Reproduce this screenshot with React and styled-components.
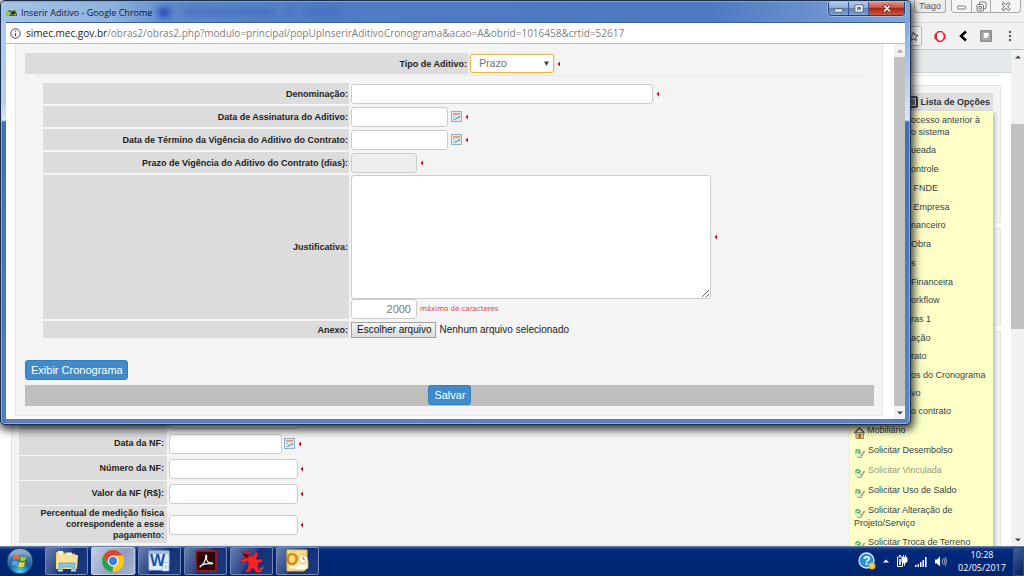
import React from "react";
import styled, { createGlobalStyle, css } from "styled-components";

const GlobalStyle = createGlobalStyle`
  *, *::before, *::after { box-sizing: border-box; }
  body { margin: 0; font-family: "Liberation Sans", Arial, sans-serif; font-size: 9px; color: #222; }
  button, input, select, textarea { font-family: inherit; margin: 0; }
`;

const SEGOE = `"Open Sans", "Noto Sans", sans-serif`;

/* ---------- desktop ---------- */

const Desktop = styled.div`
  position: relative;
  display: grid;
  grid-template-rows: minmax(0, 1fr) 30px;
  height: 100vh;
  overflow: hidden;
`;

const Browser = styled.div`
  display: flex;
  flex-direction: column;
  min-height: 0;
  background: #fff;
`;

const BrowserTitle = styled.div`
  display: flex;
  justify-content: flex-end;
  gap: 5px;
  flex: 0 0 22px;
  padding-right: 3px;
  background: #f1f1f1;
`;

const UserChip = styled.button`
  height: 13px;
  width: 32px;
  padding: 0;
  border: 1px solid #aaa;
  border-top: 0;
  border-radius: 0 0 3px 3px;
  background: #eee;
  color: #555;
  font-size: 9px;
  line-height: 12px;
`;

const WindowButtons = styled.div`
  display: flex;
  height: 13px;
  border: 1px solid #aaa;
  border-top: 0;
  border-radius: 0 0 4px 4px;
  overflow: hidden;
`;

const WindowButton = styled.button`
  display: grid;
  place-items: center;
  width: ${(p) => (p.$wide ? 30 : 19)}px;
  padding: 0;
  border: 0;
  border-left: 1px solid #aaa;
  background: #f5f5f5;
  &:first-child { border-left: 0; }
`;

const BrowserTools = styled.div`
  display: flex;
  align-items: center;
  justify-content: flex-end;
  gap: 12px;
  flex: 0 0 28px;
  padding-right: 8px;
  background: #f1f1f1;
  border-top: 1px solid #ddd;
  border-bottom: 1px solid #c4c4c4;
`;

const Omnibox = styled.div`
  display: flex;
  align-items: center;
  justify-content: flex-end;
  flex: 1;
  height: 20px;
  margin-left: 80px;
  padding-right: 2px;
  background: #fff;
  border: 1px solid #bbb;
  border-radius: 2px;
`;

const BrowserBody = styled.div`
  display: flex;
  flex: 1;
  min-height: 0;
`;

const Page = styled.div`
  position: relative;
  display: flex;
  flex-direction: column;
  flex: 1;
  min-width: 0;
  overflow: hidden;
`;

const PageBanner = styled.div`
  flex: 0 0 23px;
  background: #e4e9ec;
  border-bottom: 1px solid #cdd3d6;
`;

const Cards = styled.div`
  display: flex;
  flex-direction: column;
  gap: 5px;
  margin: 2px 10px 0 11px;
  padding-top: 9px;
  border-top: 1px solid #e6e6e6;
  flex: 1;
  min-height: 0;
`;

const Card = styled.section`
  flex: ${(p) => (p.$height ? `0 0 ${p.$height}px` : "1 0 auto")};
  padding: ${(p) => (p.$height ? "0" : "74px 8px 0 7px")};
  background: #f4f4f4;
  border: 1px solid #e6e6e6;
`;

const InvoiceRow = styled.div`
  display: grid;
  grid-template-columns: 148px auto auto;
  justify-content: start;
  align-items: center;
  column-gap: 2px;
  min-height: 25px;
`;

const InvoiceLabel = styled.label`
  display: flex;
  align-items: center;
  justify-content: flex-end;
  align-self: stretch;
  margin-bottom: 1px;
  padding: 2px 3px 2px 20px;
  background: #dcdcdc;
  font-weight: bold;
  line-height: 11px;
  text-align: right;
`;

/* ---------- options menu ---------- */

const Options = styled.aside`
  position: absolute;
  top: 43px;
  right: 18px;
  bottom: 0;
  display: flex;
  flex-direction: column;
  width: 143px;
`;

const OptionsTitle = styled.h2`
  display: flex;
  align-items: center;
  justify-content: flex-end;
  gap: 2px;
  flex: 0 0 18px;
  margin: 0;
  padding-right: 3px;
  background: #dedede;
  font-size: 9px;
  color: #333;
`;

const OptionList = styled.ul`
  flex: 1;
  min-height: 0;
  margin: 0;
  padding: 3px 0 0 4px;
  overflow: hidden;
  list-style: none;
  background: #ffffc8;
  box-shadow: 2px 2px 4px #bbb;
`;

const Option = styled.li`
  padding-left: ${(p) => (p.$clipped ? 57 : 0)}px;
  padding-bottom: ${(p) => (p.$compact ? 6 : 7)}px;
  line-height: 12px;
  white-space: ${(p) => (p.$clipped ? "nowrap" : "normal")};
  svg { vertical-align: -4px; margin: -2px 2px -2px 0; }
`;

const OptionLink = styled.a`
  color: ${(p) => (p.$muted ? "#99997e" : "#333f4a")};
  text-decoration: none;
`;

/* ---------- scrollbars ---------- */

const Scrollbar = styled.div`
  display: flex;
  flex-direction: column;
  justify-content: space-between;
  flex: 0 0 ${(p) => p.$width}px;
  background: #f1f1f1;
`;

const ScrollEnd = styled.button`
  display: grid;
  place-items: center;
  height: 13px;
  padding: 0;
  border: 0;
  background: none;
`;

const ScrollTrack = styled.div`
  flex: 1;
  padding-top: ${(p) => p.$before}%;
  display: flex;
`;

const ScrollThumb = styled.div`
  flex: 1;
  height: ${(p) => p.$size}%;
  background: #c1c1c1;
`;

/* ---------- popup window ---------- */

const Popup = styled.div`
  position: absolute;
  top: 0;
  left: 0;
  right: 113px;
  padding: 0 5px 5px;
  border: 1px solid #1c2f4a;
  border-radius: 5px;
  background:
    linear-gradient(#a9c6ea, #b5cdee 100px, #dce7f6 119px, #3f6fb4 121px, #4e7dbf) left / 5px 100% no-repeat,
    linear-gradient(#6e97d0, #a8c3ea 60px, #dce7f6 119px, #3f6fb4 121px, #5a88c6) right / 5px 100% no-repeat,
    #5a80bd;
  box-shadow: 1px 3px 9px 2px rgba(0, 0, 0, 0.75), inset 0 0 0 1px rgba(190, 215, 245, 0.55);
`;

const PopupTitle = styled.div`
  display: flex;
  align-items: center;
  gap: 4px;
  height: 21px;
  margin: 0 -5px;
  padding: 0 5px 0 5px;
  border-radius: 4px 4px 0 0;
  background: linear-gradient(90deg, #a7c4e5, #8fb2de 110px, #5c8acb 170px, #4c7cc3 330px, #4c7bc1 78%, #84a6d9);
  border-top: 1px solid #7fa5d8;
  font-family: ${SEGOE};
  font-size: 9px;
  color: #10182a;
`;

const TitleGhost = styled.div`
  display: flex;
  gap: 12px;
  align-items: center;
  margin-left: 2px;
  flex: 1;
  filter: blur(3px);
  i { height: 6px; background: #2a4fae; opacity: 0.4; }
  i:first-child { width: 12px; height: 9px; background: #0e2cae; opacity: 0.7; }
  i:nth-child(2) { width: 92px; }
  i:nth-child(3) { width: 6px; }
  i:nth-child(4) { width: 36px; opacity: 0.25; }
`;

const Captions = styled.div`
  display: flex;
  align-self: flex-start;
  height: 14px;
  border: 1px solid #24406e;
  border-top: 0;
  border-radius: 0 0 4px 4px;
  overflow: hidden;
  box-shadow: 0 0 0 1px rgba(200, 220, 250, 0.5);
`;

const Caption = styled.button`
  display: grid;
  place-items: center;
  width: ${(p) => (p.$close ? 35 : 20)}px;
  padding: 0;
  border: 0;
  border-right: ${(p) => (p.$close ? "0" : "1px solid #34548a")};
  background: ${(p) =>
    p.$close
      ? "linear-gradient(#dd9184, #c9503c 45%, #ad2411 50%, #cf5842)"
      : "linear-gradient(#b3c9ea, #8fabd6 45%, #5c80b8 50%, #7fa3d6)"};
`;

const AddressBar = styled.div`
  display: flex;
  align-items: center;
  gap: 5px;
  height: 22px;
  padding-left: 4px;
  background: #fff;
  border-top: 1px solid #3a5f99;
  border-bottom: 1px solid #bcbcbc;
  font-family: ${SEGOE};
  font-size: 10px;
  color: #808080;
  white-space: nowrap;
  b { font-weight: normal; color: #222; }
`;

const PopupBody = styled.div`
  display: flex;
  background: #fff;
`;

const Panel = styled.form`
  flex: 1;
  min-width: 0;
  margin: 0 11px 3px 9px;
  padding: 9px 8px 9px 9px;
  background: #f4f4f4;
  border: 1px solid #e4e8ee;
  border-top: 0;
`;

const FieldRow = styled.div`
  display: grid;
  grid-template-columns: ${(p) => (p.$top ? 443 : 306)}px auto;
  justify-content: start;
  align-items: center;
  column-gap: 2px;
  min-height: ${(p) => (p.$short ? 17 : 21)}px;
`;

const FieldLabel = styled.label`
  display: flex;
  align-items: center;
  justify-content: flex-end;
  align-self: stretch;
  padding-right: 1px;
  background: #dcdcdc;
  font-weight: bold;
`;

const FieldBody = styled.div`
  display: flex;
  align-items: center;
  gap: 3px;
`;

const Rule = styled.hr`
  height: 1px;
  margin: 1px 9px 7px;
  border: 0;
  background: #e8e8e8;
`;

const Fields = styled.div`
  display: flex;
  flex-direction: column;
  gap: 2px;
  margin: 0 18px 22px;
`;

const controlLook = css`
  border: 1px solid #ccc;
  border-radius: 3px;
  background: #fff;
  color: #777;
  font-size: 11px;
  outline: 0;
`;

const TextBox = styled.input`
  ${controlLook}
  width: ${(p) => p.$width}px;
  height: 20px;
  padding: 0 5px;
  &:disabled { background: #eee; }
  &:read-only { text-align: right; }
`;

const TextArea = styled.textarea`
  ${controlLook}
  display: block;
  width: 360px;
  height: 124px;
`;

const SelectWrap = styled.div`
  position: relative;
  svg { position: absolute; right: 5px; top: 7px; pointer-events: none; }
`;

const Select = styled.select`
  ${controlLook}
  display: block;
  appearance: none;
  width: 84px;
  height: 19px;
  padding: 0 8px;
  border-color: #e3b84e;
  box-shadow: 0 0 3px #f3cf7c;
  font-family: Roboto, sans-serif;
`;

const Stack = styled.div`
  display: flex;
  flex-direction: column;
`;

const Hint = styled.span`
  font-family: "DejaVu Sans", Verdana, sans-serif;
  font-size: 7px;
  color: #e03a48;
`;

const FileButton = styled.label`
  position: relative;
  height: 16px;
  padding: 0 4px 0 5px;
  border: 1px solid #a2a2a2;
  background: linear-gradient(#f6f6f6, #dadada);
  font-size: 10px;
  line-height: 14px;
  color: #111;
  input { position: absolute; inset: 0; width: 100%; opacity: 0; }
`;

const FileName = styled.span`
  font-size: 10px;
  color: #222;
`;

const BlueButton = styled.button`
  display: block;
  height: 20px;
  padding: 0 4px 0 5px;
  border: 1px solid #357ebd;
  border-radius: 3px;
  background: #428bca;
  color: #fff;
  font-size: 11px;
  line-height: 18px;
`;

const Footer = styled.div`
  display: flex;
  justify-content: center;
  margin-top: 5px;
  height: 21px;
  background: #bfbfbf;
`;

/* ---------- taskbar ---------- */

const Taskbar = styled.footer`
  display: flex;
  align-items: center;
  background: linear-gradient(#7f93b8, #1d3f86 2px, #00297a 5px, #002470);
`;

const StartButton = styled.button`
  width: 45px;
  height: 30px;
  padding: 1px 0 0 6px;
  border: 0;
  background: none;
  text-align: left;
`;

const Tasks = styled.div`
  display: flex;
  gap: 3px;
  flex: 1;
`;

const Task = styled.button`
  display: grid;
  place-items: center;
  width: ${(p) => (p.$active ? 44 : 43)}px;
  height: 28px;
  padding: 0;
  border: 1px solid ${(p) => (p.$active ? "#c3cfe4" : "#7488b4")};
  border-radius: 2px;
  background: ${(p) =>
    p.$active
      ? "linear-gradient(120deg, #c4cee2, #8d9dc0 60%, #a9b6d0)"
      : "linear-gradient(125deg, #6a7eae, #2b4687 45%, #102f76 50%, #1e3d80)"};
  box-shadow: ${(p) => (p.$active ? "2px 0 0 -1px #54699c" : "none")};
`;

const Tray = styled.div`
  display: flex;
  align-items: center;
  gap: 7px;
`;

const Clock = styled.time`
  width: 60px;
  margin-left: -2px;
  font-family: ${SEGOE};
  font-size: 9px;
  line-height: 13px;
  color: #fff;
  text-align: center;
`;

const ShowDesktop = styled.button`
  width: 11px;
  height: 29px;
  margin-left: -6px;
  padding: 0;
  border: 1px solid #2e4a86;
  background: linear-gradient(135deg, #46609a, #071f5c);
`;

/* ---------- drawings ---------- */

const Required = () => (
  <svg width="4" height="6" viewBox="0 0 4 6" role="img" aria-label="obrigatório">
    <path d="M3 0.5v5L0.5 3z" fill="#d8001c" />
  </svg>
);

const Calendar = () => (
  <svg width="11" height="11" viewBox="0 0 11 11">
    <rect x=".5" y=".5" width="10" height="10" fill="#dfeaf2" stroke="#8fb0cc" />
    <path d="M2 2h7v2H2z" fill="#e8a07c" />
    <path d="M2 5h2v1H2zM5 6h1v1H5zM2 8h3v1H2z" fill="#9dbfcb" />
    <path d="M7 5h2v2H7zM4 7h3v1H4z" fill="#6bb19c" />
  </svg>
);

const Arrow = ({ up, color = "#444" }) => (
  <svg width="6" height="4" viewBox="0 0 6 4">
    <path d={up ? "M0 3.5h6L3 .5z" : "M0 .5h6L3 3.5z"} fill={color} />
  </svg>
);

const SelectArrow = () => (
  <svg width="5" height="5" viewBox="0 0 5 5">
    <path d="M0 .5h5L2.5 5z" fill="#444" />
  </svg>
);

const Info = () => (
  <svg width="11" height="11" viewBox="0 0 11 11" fill="none" stroke="#444">
    <circle cx="5.5" cy="5.5" r="4.7" />
    <path d="M5.5 5v3.2M5.5 2.6v1.2" />
  </svg>
);

const SiteIcon = () => (
  <svg width="11" height="9" viewBox="0 0 11 9">
    <path d="M0 6l3-4 3 1 3-1 2 4v2H0z" fill="#3d6b2c" />
    <path d="M0 6l3-3 2 2-2 3H0z" fill="#9ccb37" />
    <path d="M6 4h3v2H6z" fill="#22301d" />
    <path d="M8 6h2v1H8z" fill="#d8c65a" />
  </svg>
);

const Minimize = ({ stroke = "#555" }) => (
  <svg width="11" height="8" viewBox="0 0 11 8">
    <rect x="1.5" y="4" width="8" height="3" rx="1" fill="#fff" stroke={stroke} strokeWidth=".8" />
  </svg>
);

const Maximize = () => (
  <svg width="10" height="9" viewBox="0 0 10 9">
    <rect x="1" y="1" width="8" height="7" fill="#fff" stroke="#4a5a7a" strokeWidth=".8" />
    <rect x="3.4" y="3.4" width="3.2" height="2" fill="#6d8fc4" stroke="#4a5a7a" strokeWidth=".7" />
  </svg>
);

const Restore = () => (
  <svg width="11" height="11" viewBox="0 0 11 11" fill="#fff" stroke="#666" strokeWidth=".9">
    <rect x="3.5" y="1" width="6.5" height="6.5" rx="1" />
    <rect x="1" y="3.5" width="6.5" height="6.5" rx="1" />
    <rect x="3" y="5.5" width="2.5" height="2.5" />
  </svg>
);

const Cross = ({ stroke = "#666" }) => (
  <svg width="10" height="9" viewBox="0 0 10 9" strokeLinecap="square">
    <path d="M2.5 2l5 5M7.5 2l-5 5" stroke={stroke} strokeWidth="3" />
    <path d="M2.5 2l5 5M7.5 2l-5 5" stroke="#fff" strokeWidth="1.5" />
  </svg>
);

const Star = () => (
  <svg width="11" height="11" viewBox="0 0 11 11">
    <path d="M5.5 1l1.3 3 3.2.3-2.4 2.1.7 3.2-2.8-1.7-2.8 1.7.7-3.2L1 4.300l3.200-.3z" fill="none" stroke="#555" />
  </svg>
);

const Blocker = () => (
  <svg width="12" height="13" viewBox="0 0 12 13">
    <path d="M4 1h4l3.5 3.5v4L8 12H4L.5 8.5v-4z" fill="#e3242b" />
    <path d="M3 4l1.500-1.500h4V5l1-.5v3L8 10.500H5L3 8.500z" fill="#fff" />
  </svg>
);

const BackArrow = () => (
  <svg width="10" height="12" viewBox="0 0 10 12">
    <path d="M8 1.5L3 6l5 4.5" fill="none" stroke="#000" strokeWidth="2.4" />
  </svg>
);

const GreyBadge = () => (
  <svg width="12" height="12" viewBox="0 0 12 12">
    <rect width="12" height="12" rx="1" fill="#8b8b8b" />
    <rect x="1.5" y="1.5" width="9" height="9" fill="#aaa" />
    <path d="M4 3h4l1 2-2 3H5L3.5 6z" fill="#fff" />
  </svg>
);

const Dots = () => (
  <svg width="12" height="12" viewBox="0 0 12 12" fill="#555">
    <circle cx="6" cy="2" r="1.2" />
    <circle cx="6" cy="6" r="1.2" />
    <circle cx="6" cy="10" r="1.2" />
  </svg>
);

const ListIcon = () => (
  <svg width="12" height="12" viewBox="0 0 12 12" fill="none" stroke="#111">
    <rect x="1" y="1" width="10" height="10" rx="1" strokeWidth="1.6" />
    <path d="M3 4h6M3 6h6M3 8h6" />
  </svg>
);

const House = () => (
  <svg width="11" height="12" viewBox="0 0 11 12">
    <path d="M2 5.5h7.5V11.5H2z" fill="#e9c98e" stroke="#75614a" strokeWidth=".7" />
    <path d="M.5 6L5.5 1l5 5" fill="none" stroke="#5b5648" strokeWidth="1.3" />
    <path d="M4.5 7h2.5v4.5H4.500z" fill="#a86a21" />
  </svg>
);

const EditIcon = () => (
  <svg width="12" height="12" viewBox="0 0 12 12">
    <path d="M1.500 3h5v7h-3l-2-2z" fill="#e6efdc" stroke="#b5c9ae" strokeWidth=".6" />
    <path d="M3 1.500l4 2.500-1.500 3L1 5z" fill="#58b560" />
    <path d="M3 3.500l2 .8-.6 1-2-.8z" fill="#e8ffe8" />
    <path d="M10.500 4L7 9.500" stroke="#c88f68" strokeWidth="1.5" />
    <path d="M3 10.500h5" stroke="#b9a9a0" />
  </svg>
);

const Orb = () => (
  <svg width="28" height="28" viewBox="0 0 28 28">
    <defs>
      <radialGradient id="orb" cx=".5" cy=".9" r=".9">
        <stop offset="0" stopColor="#4fd0f2" />
        <stop offset=".45" stopColor="#1a5f9c" />
        <stop offset="1" stopColor="#7d9fc3" />
      </radialGradient>
    </defs>
    <circle cx="14" cy="14" r="13" fill="url(#orb)" stroke="#163a66" />
    <path d="M8 8.5c2-1.3 4-1.2 5.7 0L12.5 13c-2-1-3.700-1-5.800 0z" fill="#f0672c" />
    <path d="M14.700 9c2 1 4 1 6-.2L19.300 13.500c-2 1-4 1-5.800 0z" fill="#92c940" />
    <path d="M6.500 14.200c2-1 3.900-1 5.700 0L11 19c-1.800-1.200-3.700-1.200-5.800 0z" fill="#4fa8e8" />
    <path d="M13.200 14.700c2 1 4 1 5.900 0L17.800 19.500c-2 1-4 1-5.900 0z" fill="#fbd02e" />
    <path d="M3 10C6 0 22 0 25 10 19 7 9 7 3 10z" fill="#fff" opacity=".25" />
  </svg>
);

const Folder = () => (
  <svg width="26" height="24" viewBox="0 0 26 24">
    <path d="M2 3h8l1 1.5h10l1 2V20H2z" fill="#e9cb6c" />
    <path d="M4 2h5v4H4zM12 3.5h6v3h-6z" fill="#f6efc8" />
    <path d="M3 6h21l-1 14H2z" fill="#f5e19a" />
    <path d="M5 14h16v7h-3v-3H8v3H5z" fill="#8cc4e6" stroke="#4f93c0" strokeWidth=".7" />
    <path d="M4 21.500h5M17 21.500h5" stroke="#b8e0f2" strokeWidth="2" />
  </svg>
);

const Chrome = () => (
  <svg width="24" height="24" viewBox="0 0 24 24">
    <circle cx="12" cy="12" r="11" fill="#fbc916" />
    <path d="M12 12L2.470 6.500A11 11 0 0 1 21.500 6.500H12z" fill="#dd4535" />
    <path d="M2.470 6.500L7.300 15 12 6.500z" fill="#dd4535" />
    <path d="M2.470 6.500L7.200 14.800 12 17.500 11.500 23A11 11 0 0 1 2.470 6.500z" fill="#25a15a" />
    <circle cx="12" cy="12" r="5.400" fill="#fff" />
    <circle cx="12" cy="12" r="4.200" fill="#3f7de0" />
  </svg>
);

const IconText = styled.text`
  font-family: "Liberation Sans", Arial, sans-serif;
  font-weight: bold;
`;

const WordIcon = () => (
  <svg width="24" height="24" viewBox="0 0 24 24">
    <path d="M1 2h20v14l-4 5H1z" fill="#e3edf8" stroke="#b7cbe0" />
    <path d="M1 2h20v3H1z" fill="#9cc0e8" />
    <path d="M15 13l6 1v8h-7z" fill="#f4f8fc" stroke="#7fa2cf" strokeWidth=".7" />
    <path d="M16.500 17h3M16.500 19h3" stroke="#8fb0da" />
    <IconText x="2" y="17" fontSize="16" fill="#1c50a4">W</IconText>
  </svg>
);

const Acrobat = () => (
  <svg width="22" height="22" viewBox="0 0 22 22">
    <rect x="1" y="1" width="20" height="20" fill="#2b0505" stroke="#b01c14" strokeWidth="1.6" />
    <path d="M5 16.500c3-1.500 5.500-5.500 5.800-10.500.1-1.500 1.400-1 .8 1-.9 3.500 1.400 6 5.400 5.800 1.300.2.800 1.500-.6 1.200-3.500-.8-6.800-.4-9.800 1.200-.8 1.500-2 2.200-1.600 1.300z" fill="none" stroke="#fff" strokeWidth="1.1" />
  </svg>
);

const RedBeast = () => (
  <svg width="26" height="25" viewBox="0 0 26 25">
    <path d="M3 2l2 1.500L9 3l1.500-2 .8 4 .2 2.500L15 6l1-3 3 .5-.5 4-1.500 2 1 1 5-.5 1 2.500-5 1.500.5 2-1 2 2.500 3-1 2.500h-4l.5-2-3.500-2.500L11 23H6l.5-2 2-1 1-5-1-2.500L2 13.500 1 11l6-2-2.500-1.500z" fill="#f62424" stroke="#5c1438" strokeWidth=".5" />
    <path d="M20.500 18.500c1.500 2 4 1 3.500-.8M22 19.500c1 2-.5 3.500-2 3" fill="none" stroke="#f04040" strokeWidth="1.2" />
    <path d="M4.500 5l3 1.500M7.500 6.500L10 4.800M6.500 7.800h3" stroke="#300008" strokeWidth="1.5" />
  </svg>
);

const Outlook = () => (
  <svg width="25" height="24" viewBox="0 0 25 24">
    <path d="M2 1h20v18l-3 3H2z" fill="#f5dc8c" stroke="#e6bb56" />
    <path d="M10 11h13v8l-3 2H9z" fill="#fdf4d2" stroke="#e2b04a" strokeWidth=".7" />
    <circle cx="18" cy="10" r="4.500" fill="#fffbe9" stroke="#d8a032" strokeWidth=".8" />
    <path d="M18 7.500V10l2 1" fill="none" stroke="#b77914" />
    <path d="M5 18l7 1 8-1" fill="none" stroke="#fff" strokeWidth="2" />
    <IconText x="1" y="16" fontSize="16" fill="#d98410">O</IconText>
  </svg>
);

const Help = () => (
  <svg width="18" height="18" viewBox="0 0 18 18">
    <circle cx="8.500" cy="8.500" r="7.500" fill="#2c8fdb" stroke="#dcecf8" strokeWidth="1.3" />
    <IconText x="5" y="13" fontSize="12" fill="#fff">?</IconText>
    <circle cx="14" cy="14" r="3.500" fill="#f5b51e" />
    <path d="M14 12v3.500" stroke="#fff" />
  </svg>
);

const Plug = () => (
  <svg width="12" height="14" viewBox="0 0 12 14" fill="none" stroke="#fff">
    <path d="M1.500 3v9.500h5V3zM3 1.500h2" />
    <path d="M3 5h2v6H3z" fill="#cfd6e4" stroke="none" />
    <path d="M6 3.500h5v4L9.500 9H7.500L6 7.500zM8.500 9v3M7.500 1v2M9.500 1v2" fill="#fff" strokeWidth=".9" />
  </svg>
);

const Signal = () => (
  <svg width="13" height="11" viewBox="0 0 13 11" fill="#fff">
    <path d="M0 9h1.500v2H0zM2.500 8H4v3H2.500zM5 6h1.500v5H5zM7.500 4H9v7H7.500zM10 1h1.600v10H10z" />
  </svg>
);

const Speaker = () => (
  <svg width="12" height="11" viewBox="0 0 12 11">
    <path d="M0 3.500h2L5 .5v10L2 7.500H0z" fill="#fff" />
    <path d="M7 3.500q1.200 2 0 4M8.700 2.300q2 3.200 0 6.400M10.300 1.200q2.400 4.300 0 8.600" fill="none" stroke="#d5dcec" strokeWidth=".8" />
  </svg>
);

/* ---------- content ---------- */

const invoiceFields = [
  { id: "parcela", label: "", width: 129 },
  { id: "nf-data", label: "Data da NF:", width: 113, calendar: true },
  { id: "nf-numero", label: "Número da NF:", width: 129 },
  { id: "nf-valor", label: "Valor da NF (R$):", width: 129 },
  { id: "nf-percentual", label: "Percentual de medição física correspondente a esse pagamento:", width: 129 },
];

const clippedOptions = [
  { text: <>ocesso anterior à<br />o sistema</>, compact: true },
  { text: "ueada" },
  { text: "ontrole" },
  { text: "\u00a0FNDE" },
  { text: "\u00a0Empresa", compact: true },
  { text: "nanceiro" },
  { text: "Obra" },
  { text: "s" },
  { text: "Financeira", compact: true },
  { text: "orkflow" },
  { text: "ras 1" },
  { text: "ação", compact: true },
  { text: "rato" },
  { text: "os do Cronograma", compact: true },
  { text: "vo", compact: true },
  { text: "o contrato" },
];

const options = [
  { text: "Mobiliário", icon: <House /> },
  { text: "Solicitar Desembolso" },
  { text: "Solicitar Vinculada", muted: true },
  { text: "Solicitar Uso de Saldo" },
  { text: "Solicitar Alteração de Projeto/Serviço" },
  { text: "Solicitar Troca de Terreno" },
];

function BackgroundBrowser() {
  return (
    <Browser>
      <BrowserTitle>
        <UserChip>Tiago</UserChip>
        <WindowButtons>
          <WindowButton aria-label="Minimizar"><Minimize /></WindowButton>
          <WindowButton aria-label="Restaurar"><Restore /></WindowButton>
          <WindowButton $wide aria-label="Fechar"><Cross /></WindowButton>
        </WindowButtons>
      </BrowserTitle>
      <BrowserTools>
        <Omnibox><Star /></Omnibox>
        <Blocker />
        <BackArrow />
        <GreyBadge />
        <Dots />
      </BrowserTools>
      <BrowserBody>
        <Page>
          <PageBanner />
          <Cards>
            <Card $height={138} />
            <Card $height={98} />
            <Card>
              {invoiceFields.map((f) => (
                <InvoiceRow key={f.id}>
                  <InvoiceLabel htmlFor={f.id}>{f.label}</InvoiceLabel>
                  <TextBox id={f.id} $width={f.width} />
                  <FieldBody>
                    {f.calendar && <Calendar />}
                    <Required />
                  </FieldBody>
                </InvoiceRow>
              ))}
            </Card>
          </Cards>
          <Options>
            <OptionsTitle><ListIcon />Lista de Opções</OptionsTitle>
            <OptionList>
              {clippedOptions.map((o, i) => (
                <Option key={i} $clipped $compact={o.compact}>
                  <OptionLink href="#">{o.text}</OptionLink>
                </Option>
              ))}
              {options.map((o) => (
                <Option key={o.text}>
                  {o.icon || <EditIcon />}
                  <OptionLink href="#" $muted={o.muted}>{o.text}</OptionLink>
                </Option>
              ))}
            </OptionList>
          </Options>
        </Page>
        <Scrollbar $width={13}>
          <ScrollEnd aria-label="Subir"><Arrow up /></ScrollEnd>
          <ScrollTrack $before={470}><ScrollThumb $size={50} /></ScrollTrack>
          <ScrollEnd aria-label="Descer"><Arrow /></ScrollEnd>
        </Scrollbar>
      </BrowserBody>
    </Browser>
  );
}

function AmendmentPopup() {
  return (
    <Popup>
      <PopupTitle>
        <SiteIcon />
        <span>Inserir Aditivo - Google Chrome</span>
        <TitleGhost><i /><i /><i /><i /></TitleGhost>
        <Captions>
          <Caption aria-label="Minimizar"><Minimize stroke="#4a5a7a" /></Caption>
          <Caption aria-label="Maximizar"><Maximize /></Caption>
          <Caption $close aria-label="Fechar"><Cross stroke="#5c3a3a" /></Caption>
        </Captions>
      </PopupTitle>
      <AddressBar>
        <Info />
        <span><b>simec.mec.gov.br</b>/obras2/obras2.php?modulo=principal/popUpInserirAditivoCronograma&amp;acao=A&amp;obrid=1016458&amp;crtid=52617</span>
      </AddressBar>
      <PopupBody>
        <Panel onSubmit={(e) => e.preventDefault()}>
          <FieldRow $top>
            <FieldLabel htmlFor="tipo">Tipo de Aditivo:</FieldLabel>
            <FieldBody>
              <SelectWrap>
                <Select id="tipo" defaultValue="Prazo"><option>Prazo</option></Select>
                <SelectArrow />
              </SelectWrap>
              <Required />
            </FieldBody>
          </FieldRow>
          <Rule />
          <Fields>
            <FieldRow>
              <FieldLabel htmlFor="denominacao">Denominação:</FieldLabel>
              <FieldBody><TextBox id="denominacao" $width={302} /><Required /></FieldBody>
            </FieldRow>
            <FieldRow>
              <FieldLabel htmlFor="assinatura">Data de Assinatura do Aditivo:</FieldLabel>
              <FieldBody><TextBox id="assinatura" $width={97} /><Calendar /><Required /></FieldBody>
            </FieldRow>
            <FieldRow>
              <FieldLabel htmlFor="termino">Data de Término da Vigência do Aditivo do Contrato:</FieldLabel>
              <FieldBody><TextBox id="termino" $width={97} /><Calendar /><Required /></FieldBody>
            </FieldRow>
            <FieldRow>
              <FieldLabel htmlFor="prazo">Prazo de Vigência do Aditivo do Contrato (dias):</FieldLabel>
              <FieldBody><TextBox id="prazo" $width={66} disabled /><Required /></FieldBody>
            </FieldRow>
            <FieldRow>
              <FieldLabel htmlFor="justificativa">Justificativa:</FieldLabel>
              <Stack>
                <FieldBody><TextArea id="justificativa" /><Required /></FieldBody>
                <FieldBody>
                  <TextBox id="restante" $width={66} readOnly value="2000" />
                  <Hint as="label" htmlFor="restante">máximo de caracteres</Hint>
                </FieldBody>
              </Stack>
            </FieldRow>
            <FieldRow $short>
              <FieldLabel htmlFor="anexo">Anexo:</FieldLabel>
              <FieldBody>
                <FileButton>Escolher arquivo<input id="anexo" type="file" /></FileButton>
                <FileName>Nenhum arquivo selecionado</FileName>
              </FieldBody>
            </FieldRow>
          </Fields>
          <BlueButton type="button">Exibir Cronograma</BlueButton>
          <Footer><BlueButton type="submit">Salvar</BlueButton></Footer>
        </Panel>
        <Scrollbar $width={11}>
          <ScrollEnd aria-label="Subir"><Arrow up color="#a0a0a0" /></ScrollEnd>
          <ScrollTrack $before={0}><ScrollThumb $size={100} /></ScrollTrack>
          <ScrollEnd aria-label="Descer"><Arrow /></ScrollEnd>
        </Scrollbar>
      </PopupBody>
    </Popup>
  );
}

export default function App() {
  return (
    <>
      <GlobalStyle />
      <Desktop>
        <BackgroundBrowser />
        <Taskbar>
          <StartButton aria-label="Iniciar"><Orb /></StartButton>
          <Tasks>
            <Task aria-label="Explorador"><Folder /></Task>
            <Task $active aria-label="Chrome"><Chrome /></Task>
            <Task aria-label="Word"><WordIcon /></Task>
            <Task aria-label="Acrobat"><Acrobat /></Task>
            <Task aria-label="Aplicativo"><RedBeast /></Task>
            <Task aria-label="Outlook"><Outlook /></Task>
          </Tasks>
          <Tray>
            <Help />
            <Arrow up color="#fff" />
            <Plug />
            <Signal />
            <Speaker />
            <Clock>10:28<br />02/05/2017</Clock>
            <ShowDesktop aria-label="Mostrar área de trabalho" />
          </Tray>
        </Taskbar>
        <AmendmentPopup />
      </Desktop>
    </>
  );
}
